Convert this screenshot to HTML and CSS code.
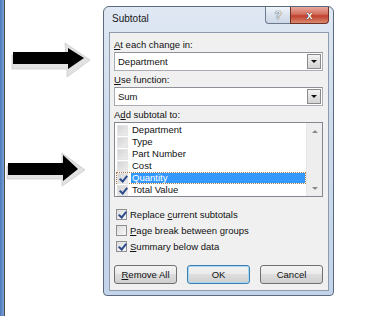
FILE: index.html
```html
<!DOCTYPE html>
<html lang="en">
<head>
    <meta charset="UTF-8">
    <title>Subtotal</title>
    <link rel="stylesheet" href="styles.css">
</head>
<body>
    <div class="screen">
        <div class="sidebar"></div>

        <div class="annot">
            <svg width="98" height="316" viewBox="5 0 98 316">
                <!-- top arrow -->
                <polygon class="arrow-shade" points="12,55 66,55 65,43 90,60 67,77 67,69 12,69"/>
                <polygon class="arrow-fill" points="13,52 68,52 68,48 84,58 68,69 68,64 13,64"/>
                <!-- bottom arrow -->
                <polygon class="arrow-shade" points="7,166 62,166 62,153 85,170 62,186 62,179 7,179"/>
                <polygon class="arrow-fill" points="8,163 63,163 63,155 78,169 63,181 63,175 8,175"/>
            </svg>
        </div>

        <div class="dialog">
            <div class="titlebar">
                <span class="title">Subtotal</span>
                <div class="caption">
                    <span class="cap-btn help">?</span>
                    <span class="cap-btn close">x</span>
                </div>
            </div>

            <div class="client">
                <div class="label"><u>A</u>t each change in:</div>
                <div class="combo">
                    <span class="combo-text">Department</span>
                    <span class="combo-arrow"></span>
                </div>

                <div class="label"><u>U</u>se function:</div>
                <div class="combo">
                    <span class="combo-text">Sum</span>
                    <span class="combo-arrow"></span>
                </div>

                <div class="label">A<u>d</u>d subtotal to:</div>
                <div class="listbox">
                    <div class="items">
                        <div class="item"><span class="lcheck"></span><span class="itext">Department</span></div>
                        <div class="item"><span class="lcheck"></span><span class="itext">Type</span></div>
                        <div class="item"><span class="lcheck"></span><span class="itext">Part Number</span></div>
                        <div class="item"><span class="lcheck"></span><span class="itext">Cost</span></div>
                        <div class="item focus"><span class="lcheck on"></span><span class="itext selected">Quantity</span></div>
                        <div class="item"><span class="lcheck on"></span><span class="itext">Total Value</span></div>
                    </div>
                    <div class="scrollbar">
                        <span class="sb-up"></span>
                        <span class="sb-down"></span>
                    </div>
                </div>

                <div class="options">
                    <div class="opt"><span class="check on"></span><span>Replace <u>c</u>urrent subtotals</span></div>
                    <div class="opt"><span class="check"></span><span><u>P</u>age break between groups</span></div>
                    <div class="opt"><span class="check on"></span><span><u>S</u>ummary below data</span></div>
                </div>

                <div class="buttons">
                    <div class="btn"><span><u>R</u>emove All</span></div>
                    <div class="btn default">OK</div>
                    <div class="btn">Cancel</div>
                </div>
            </div>
        </div>
    </div>
</body>
</html>
```

FILE: styles.css
```css
* {
    box-sizing: border-box;
    margin: 0;
    padding: 0;
}

body {
    background: #ffffff;
    font-family: 'Liberation Sans', Arial, sans-serif;
    font-size: 9.5px;
    color: #111111;
    width: 376px;
    height: 316px;
    overflow: hidden;
}

.screen {
    display: flex;
    height: 316px;
}

.sidebar {
    width: 5px;
    background: linear-gradient(to right, #4c79bb, #7ba1d6);
    border-right: 1px solid #4a4a4a;
}

.annot {
    width: 98px;
}

.annot svg {
    display: block;
}

.arrow-shade {
    fill: #e2e2e2;
    stroke: #d2d2d2;
    stroke-width: 1;
}

.arrow-fill {
    fill: #000000;
}

/* dialog frame */
.dialog {
    margin-top: 6px;
    width: 231px;
    height: 290px;
    border: 1px solid #5b6a7e;
    border-radius: 6px 6px 4px 4px;
    background: linear-gradient(to bottom, #dfe8f3, #cfdcec 40%, #c3d4ea);
    padding: 0 4px 4px 5px;
    display: flex;
    flex-direction: column;
}

.titlebar {
    height: 25px;
    display: flex;
    justify-content: space-between;
    align-items: flex-start;
}

.title {
    margin-top: 6px;
    margin-left: 3px;
    font-size: 10px;
    color: #1a1a1a;
}

.caption {
    display: flex;
}

.cap-btn {
    height: 17px;
    display: flex;
    align-items: center;
    justify-content: center;
    font-weight: bold;
    border: 1px solid #6b7a8f;
    border-top: none;
}

.help {
    width: 25px;
    border-radius: 0 0 0 4px;
    border-right: none;
    background: linear-gradient(to bottom, #f1f5fa, #dbe3ee 50%, #cdd7e5);
    color: #e8edf4;
    font-size: 11px;
    text-shadow: 0 0 1px #555, 0 0 1px #555;
}

.close {
    width: 39px;
    border-radius: 0 0 4px 0;
    border-color: #6e3027;
    background: linear-gradient(to bottom, #e7a99c, #d36f5f 45%, #c0402f 55%, #d98a6e);
    color: #ffffff;
    font-size: 11px;
    text-shadow: 0 0 1px #3a1a14, 0 0 1px #3a1a14;
}

/* client area */
.client {
    flex: 1;
    background: #f0f0f0;
    border: 1px solid #8e9bad;
    padding: 5px 5px 0 4px;
}

u {
    text-decoration: underline;
    text-underline-offset: 1px;
}

.label {
    height: 13px;
    line-height: 13px;
    margin-bottom: 1px;
}

.combo {
    height: 19px;
    background: #ffffff;
    border: 1px solid #a9acb3;
    border-top-color: #8e9197;
    display: flex;
    align-items: center;
    justify-content: space-between;
    padding: 1px 1px 1px 3px;
    margin-bottom: 2px;
}

.combo-arrow {
    width: 14px;
    height: 15px;
    border: 1px solid #8a8a8a;
    background: linear-gradient(to bottom, #f3f3f3, #e2e2e2 50%, #d4d4d4);
    position: relative;
}

.combo-arrow::after {
    content: "";
    position: absolute;
    left: 3px;
    top: 5px;
    border-left: 3px solid transparent;
    border-right: 3px solid transparent;
    border-top: 3px solid #111111;
}

.listbox {
    height: 75px;
    background: #ffffff;
    border: 1px solid #828790;
    display: flex;
    margin-bottom: 11px;
}

.items {
    flex: 1;
    padding: 1px 0 0 1px;
}

.item {
    height: 12px;
    display: flex;
    align-items: center;
    gap: 3px;
    border: 1px solid transparent;
}

.item.focus {
    border: 1px dotted #b07a4a;
}

.lcheck {
    width: 11px;
    height: 11px;
    background: linear-gradient(135deg, #d4d4d4, #eeeeee);
    border: 1px solid #e4e4e4;
    position: relative;
}

.itext {
    line-height: 10px;
    padding: 0 1px;
}

.itext.selected {
    flex: 1;
    background: #3399ff;
    color: #ffffff;
}

.check.on::after,
.lcheck.on::after {
    content: "";
    position: absolute;
    left: 3px;
    top: 0px;
    width: 3px;
    height: 6px;
    border-right: 2px solid #2c4a8c;
    border-bottom: 2px solid #2c4a8c;
    transform: rotate(40deg);
}

.scrollbar {
    width: 16px;
    background: #eeeeee;
    border-left: 1px solid #e6e6e6;
    display: flex;
    flex-direction: column;
    justify-content: space-between;
    align-items: center;
    padding: 7px 0 6px;
}

.sb-up {
    border-left: 3px solid transparent;
    border-right: 3px solid transparent;
    border-bottom: 3px solid #8a8a8a;
}

.sb-down {
    border-left: 3px solid transparent;
    border-right: 3px solid transparent;
    border-top: 3px solid #8a8a8a;
}

.options {
    display: flex;
    flex-direction: column;
    gap: 4px;
    padding-left: 2px;
}

.opt {
    height: 12px;
    display: flex;
    align-items: center;
    gap: 3px;
}

.check {
    width: 11px;
    height: 11px;
    border: 1px solid #8f8f8f;
    background: linear-gradient(135deg, #dcdcdc, #f8f8f8);
    position: relative;
}

.buttons {
    display: flex;
    justify-content: space-between;
    margin-top: 13px;
    padding-right: 0;
}

.btn {
    width: 63px;
    height: 19px;
    border: 1px solid #707070;
    border-radius: 3px;
    background: linear-gradient(to bottom, #f3f3f3, #ebebeb 45%, #dddddd 50%, #cfcfcf);
    display: flex;
    align-items: center;
    justify-content: center;
}

.btn.default {
    border-color: #3c7fb1;
    box-shadow: inset 0 0 0 1px #a6d8f4;
}
```
